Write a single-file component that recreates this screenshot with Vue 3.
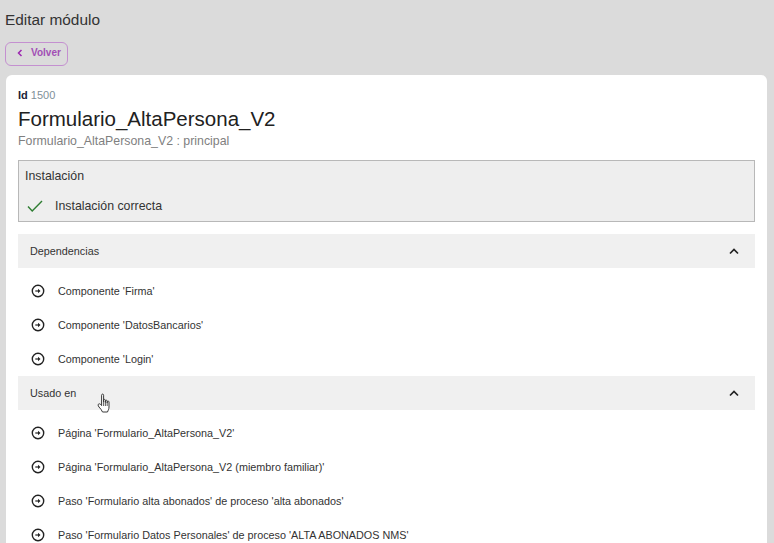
<script setup>
const groups = [
  { title: 'Dependencias', items: ["Componente 'Firma'", "Componente 'DatosBancarios'", "Componente 'Login'"] },
  { title: 'Usado en', hand: true, items: ["Página 'Formulario_AltaPersona_V2'", "Página 'Formulario_AltaPersona_V2 (miembro familiar)'", "Paso 'Formulario alta abonados' de proceso 'alta abonados'", "Paso 'Formulario Datos Personales' de proceso 'ALTA ABONADOS NMS'"] },
]
</script>

<template>
  <div class="page">
    <h1 class="title">Editar módulo</h1>
    <button class="back">
      <svg width="6" height="8" viewBox="0 0 6 8"><path d="M4.5 1 1.5 4l3 3" fill="none" stroke="#9c27b0" stroke-width="1.5"/></svg>
      <span>Volver</span>
    </button>
    <main class="card">
      <div class="id"><b>Id</b> <span>1500</span></div>
      <h2 class="name">Formulario_AltaPersona_V2</h2>
      <div class="sub">Formulario_AltaPersona_V2 : principal</div>
      <section class="install">
        <div class="install-title">Instalación</div>
        <div class="install-row">
          <svg width="16" height="12" viewBox="0 0 16 12"><path d="M1 6.5 5.2 11 15 1" fill="none" stroke="#2e7d32" stroke-width="1.4"/></svg>
          <span>Instalación correcta</span>
        </div>
      </section>
      <section v-for="g in groups" :key="g.title" class="group">
        <header class="group-head">
          <span class="group-title">{{ g.title }}</span>
          <svg v-if="g.hand" class="hand" width="15" height="20" viewBox="0 0 15 20">
            <path d="M4.6 11V2.200c0-1.500 2-1.500 2 0V9 7.300c0-1.200 1.800-1.200 1.800 0v2-1.200c0-1.200 1.800-1.200 1.800 0v1.600-.8c0-1.100 1.800-1.100 1.800 0V14c0 2.300-1 3.400-1.500 5H5.500C4.800 17 3.500 15.800 2 14 .7 12.500 1 11 2 10.800c.9-.2 1.800.8 2.600 1.800Z" fill="#fff" stroke="#3a3a3a" stroke-width="1" stroke-linejoin="round"/>
            <path d="M6.600 9v4M8.400 9v4M10.200 9v4" fill="none" stroke="#3a3a3a" stroke-width=".8"/>
          </svg>
          <svg class="chev" width="10" height="7" viewBox="0 0 10 7"><path d="M1 5.500 5 1.500l4 4" fill="none" stroke="#222" stroke-width="1.700"/></svg>
        </header>
        <ul class="list">
          <li v-for="it in g.items" :key="it">
            <svg width="14" height="14" viewBox="0 0 14 14">
              <circle cx="7" cy="7" r="5.700" fill="none" stroke="#222" stroke-width="1.400"/>
              <path d="M7 4.700 9.500 7 7 9.300Z" fill="#222"/>
              <path d="M4.300 7H8" fill="none" stroke="#222" stroke-width="1.200"/>
            </svg>
            <span>{{ it }}</span>
          </li>
        </ul>
      </section>
    </main>
  </div>
</template>

<style>
html, body { margin: 0; height: 100%; overflow: hidden; background: #dbdbdb; }
</style>

<style scoped>
.page {
  height: 543px;
  overflow: hidden;
  box-sizing: border-box;
  padding: 11px 7px 0 5px;
  background: #dbdbdb;
  font-family: "Liberation Sans", Arial, sans-serif;
  color: #212121;
}
.title { margin: 0; font-size: 15.4px; font-weight: 400; line-height: 18px; color: #333; }
.back {
  display: flex; align-items: center; gap: 8px;
  width: 63px; height: 24px; margin-top: 13px; padding: 0 0 3px 11px;
  box-sizing: border-box;
  background: transparent;
  border: 1px solid #c490d0; border-radius: 6px;
  color: #a24fb5; font: 700 10px "Liberation Sans", Arial, sans-serif;
}
.card {
  margin: 9px 0 0 1px;
  padding: 14px 12px 0;
  height: 480px;
  box-sizing: border-box;
  background: #fff;
  border-radius: 6px 6px 0 0;
}
.id { font-size: 11px; line-height: 13px; color: #809099; }
.id b { color: #1a2238; font-weight: 700; }
.name { margin: 5px 0 0; font-size: 20.5px; font-weight: 400; line-height: 24px; color: #212121; }
.sub { margin-top: 3px; font-size: 12.35px; line-height: 14px; color: #7f7f7f; }
.install {
  margin-top: 12px;
  margin-bottom: 12px;
  height: 62px; box-sizing: border-box;
  padding: 8px 6px;
  background: #eeeeee;
  border: 1px solid #b8b8b8;
}
.install-title { font-size: 12.35px; line-height: 14px; color: #333; }
.install-row { display: flex; align-items: center; gap: 12px; margin-top: 16px; padding-left: 2px; font-size: 12.35px; line-height: 14px; color: #333; }
.group-head {
  position: relative;
  display: flex; align-items: center; justify-content: space-between;
  height: 34px; padding: 0 16px 0 12px;
  background: #f0f0f0;
}
.group-title { font-size: 10.8px; color: #333; }
.hand { position: absolute; left: 79px; top: 17px; }
.list { list-style: none; margin: 0; padding: 6px 0 0; }
.list li { display: flex; align-items: center; gap: 13px; height: 34px; padding-left: 13px; font-size: 10.8px; color: #333; }
</style>
